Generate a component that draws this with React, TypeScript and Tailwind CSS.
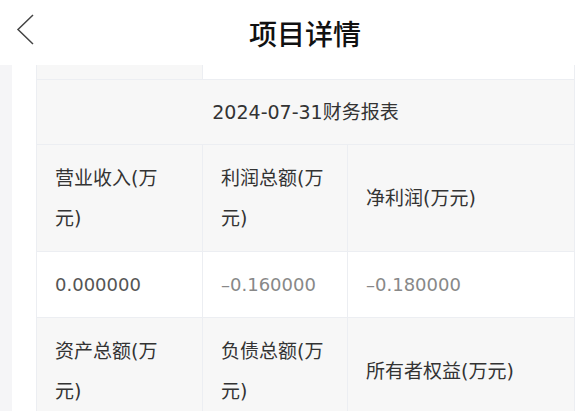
import React from 'react';

const font = { fontFamily: '"DejaVu Sans", "Noto Sans CJK SC", sans-serif' };
const cjk = { fontFamily: '"Noto Sans CJK SC", sans-serif' };

const App: React.FC = () => {
  return (
    <div className="w-[578px] h-[411px] overflow-hidden bg-white text-[#333]" style={font}>
      <div className="relative h-[65px] flex items-center justify-center">
        <svg className="absolute left-[14px] top-[13px]" width="22" height="36" viewBox="0 0 22 36">
          <path d="M19 2 L4 16.5 L19 31" fill="none" stroke="#444" strokeWidth="1.5" />
        </svg>
        <h1 className="ml-[32px] text-[28px] font-medium text-[#111] mt-[1px]" style={cjk}>项目详情</h1>
      </div>
      <div className="flex">
        <div className="w-[12px] bg-[#f5f5f7]" />
        <div className="ml-[24px] w-[539px] border-l border-r border-[#eceef2]">
          <div className="grid grid-cols-[166px_145px_1fr] h-[15px] border-b border-[#eceef2]">
            <div className="bg-[#f7f7f7] border-r border-[#eceef2]" />
            <div />
            <div />
          </div>
          <div className="h-[65px] flex items-center justify-center bg-[#f7f7f7] border-b border-[#eceef2] text-[19px]">
            2024-07-31财务报表
          </div>
          <div className="grid grid-cols-[166px_145px_1fr] h-[107px] bg-[#f7f7f7] border-b border-[#eceef2] text-[19px] leading-[40px]">
            <div className="flex items-center pl-[18px] pr-[28px] border-r border-[#eceef2]">营业收入(万元)</div>
            <div className="flex items-center pl-[18px] pr-[18px] border-r border-[#eceef2]">利润总额(万元)</div>
            <div className="flex items-center pl-[18px] pr-[10px]">净利润(万元)</div>
          </div>
          <div className="grid grid-cols-[166px_145px_1fr] h-[66px] bg-white border-b border-[#eceef2] text-[18px]">
            <div className="flex items-center px-[18px] border-r border-[#eceef2] text-[#555]">0.000000</div>
            <div className="flex items-center px-[18px] border-r border-[#eceef2] text-[#888]">–0.160000</div>
            <div className="flex items-center px-[18px] text-[#888]">–0.180000</div>
          </div>
          <div className="grid grid-cols-[166px_145px_1fr] h-[107px] bg-[#f7f7f7] border-b border-[#eceef2] text-[19px] leading-[40px]">
            <div className="flex items-center pl-[18px] pr-[28px] border-r border-[#eceef2]">资产总额(万元)</div>
            <div className="flex items-center pl-[18px] pr-[18px] border-r border-[#eceef2]">负债总额(万元)</div>
            <div className="flex items-center pl-[18px] pr-[10px]">所有者权益(万元)</div>
          </div>
        </div>
      </div>
    </div>
  );
};

export default App;
